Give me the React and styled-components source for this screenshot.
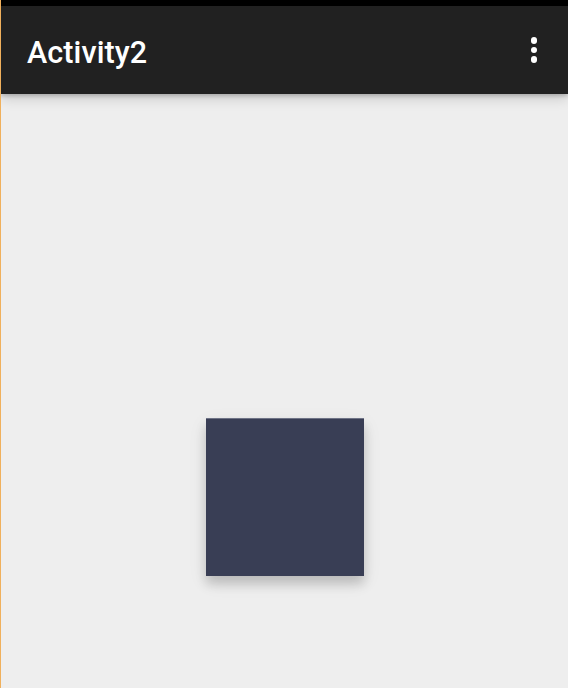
import React from "react";
import styled, { createGlobalStyle } from "styled-components";

const Global = createGlobalStyle`
  html, body { margin: 0; padding: 0; height: 100%; }
  body { background: #eeeeee; font-family: Roboto, "Noto Sans", sans-serif; }
  #root { height: 100%; }
`;

const Screen = styled.div`
  height: 688px;
  width: 568px;
  box-sizing: border-box;
  border-left: 1px solid #f0b05c;
  background: #eeeeee;
  display: flex;
  flex-direction: column;
  overflow: hidden;
`;

const StatusBar = styled.div`
  height: 6px;
  background: #000000;
  flex-shrink: 0;
`;

const AppBar = styled.header`
  position: relative;
  z-index: 1;
  height: 88px;
  flex-shrink: 0;
  background: #212121;
  display: flex;
  align-items: center;
  justify-content: space-between;
  padding: 0 21px 0 26px;
  box-shadow: 0 2px 4px rgba(0, 0, 0, 0.2), 0 5px 12px rgba(0, 0, 0, 0.14);
`;

const Title = styled.h1`
  margin: 0;
  color: #ffffff;
  font-family: Roboto, "Noto Sans", sans-serif;
  font-weight: 500;
  font-size: 30.5px;
  letter-spacing: 0.1px;
  line-height: 1;
  padding-top: 6px;
`;

const MenuButton = styled.button`
  background: none;
  border: none;
  padding: 0;
  width: 26px;
  height: 40px;
  display: flex;
  flex-direction: column;
  align-items: center;
  justify-content: center;
  gap: 3px;
  cursor: pointer;
`;

const Dot = styled.span`
  width: 6.5px;
  height: 6.5px;
  border-radius: 50%;
  background: #ffffff;
`;

const Content = styled.main`
  flex: 1;
  display: flex;
  justify-content: center;
  align-items: flex-start;
  padding-top: 324px;
  padding-left: 1px;
`;

const Square = styled.div`
  width: 158px;
  height: 158px;
  background: #393e55;
  border-top: 1px solid #6e7386;
  box-sizing: border-box;
  box-shadow: 0 8px 10px rgba(0, 0, 0, 0.16), 0 6px 18px rgba(0, 0, 0, 0.08);
`;

export default function App() {
  return (
    <>
      <Global />
      <Screen>
        <StatusBar />
        <AppBar>
          <Title>Activity2</Title>
          <MenuButton aria-label="More options">
            <Dot />
            <Dot />
            <Dot />
          </MenuButton>
        </AppBar>
        <Content>
          <Square />
        </Content>
      </Screen>
    </>
  );
}
